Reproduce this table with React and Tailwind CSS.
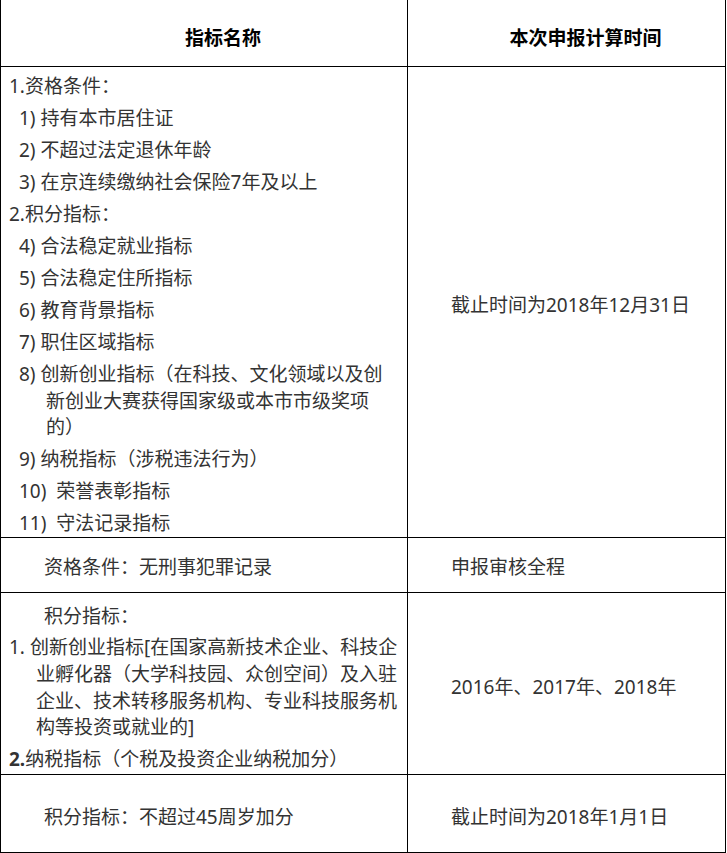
import React from 'react';

const font = "font-['Noto_Sans','Noto_Sans_CJK_SC',sans-serif]";

const P = ({ className = '', children }) => (
    <div className={`whitespace-nowrap leading-[26.7px] ${className}`}>{children}</div>
);

const App = () => {
    return (
        <div className={`w-[727px] bg-white text-[19px] text-[#333] ${font}`}>
            <div className="w-[726px] border-l border-r border-b border-black">
                {/* Header */}
                <div className="flex h-[67px] border-b border-black">
                    <div className="w-[407px] border-r border-black flex items-center justify-center pl-[38px] pt-[10px] font-bold text-black">
                        指标名称
                    </div>
                    <div className="flex-1 flex items-center justify-center pl-[38px] pt-[10px] font-bold text-black">
                        本次申报计算时间
                    </div>
                </div>

                {/* Row 1 */}
                <div className="flex h-[471px] border-b border-black">
                    <div className="w-[407px] border-r border-black pt-[6px] flex flex-col gap-[5.3px]">
                        <P className="pl-[8px]">1.资格条件：</P>
                        <P className="pl-[18px]">1) 持有本市居住证</P>
                        <P className="pl-[18px]">2) 不超过法定退休年龄</P>
                        <P className="pl-[18px]">3) 在京连续缴纳社会保险7年及以上</P>
                        <P className="pl-[8px]">2.积分指标：</P>
                        <P className="pl-[18px]">4) 合法稳定就业指标</P>
                        <P className="pl-[18px]">5) 合法稳定住所指标</P>
                        <P className="pl-[18px]">6) 教育背景指标</P>
                        <P className="pl-[18px]">7) 职住区域指标</P>
                        <div>
                            <P className="pl-[18px]">8) 创新创业指标（在科技、文化领域以及创</P>
                            <P className="pl-[45px]">新创业大赛获得国家级或本市市级奖项</P>
                            <P className="pl-[45px]">的）</P>
                        </div>
                        <P className="pl-[18px]">9) 纳税指标（涉税违法行为）</P>
                        <P className="pl-[18px]">10)&nbsp; 荣誉表彰指标</P>
                        <P className="pl-[18px]">11)&nbsp; 守法记录指标</P>
                    </div>
                    <div className="flex-1 flex items-center pl-[43px] pt-[7px]">
                        截止时间为2018年12月31日
                    </div>
                </div>

                {/* Row 2 */}
                <div className="flex h-[55px] border-b border-black">
                    <div className="w-[407px] border-r border-black flex items-center pl-[43px] pt-[4px]">
                        资格条件：无刑事犯罪记录
                    </div>
                    <div className="flex-1 flex items-center pl-[43px] pt-[4px]">
                        申报审核全程
                    </div>
                </div>

                {/* Row 3 */}
                <div className="flex h-[182px] border-b border-black">
                    <div className="w-[407px] border-r border-black pt-[10px] flex flex-col">
                        <P className="pl-[43px] mb-[4.5px]">积分指标：</P>
                        <P className="pl-[8px]">1. 创新创业指标[在国家高新技术企业、科技企</P>
                        <P className="pl-[35px]">业孵化器（大学科技园、众创空间）及入驻</P>
                        <P className="pl-[35px]">企业、技术转移服务机构、专业科技服务机</P>
                        <P className="pl-[35px] mb-[5.3px]">构等投资或就业的]</P>
                        <P className="pl-[8px]"><span className="font-bold">2.</span>纳税指标（个税及投资企业纳税加分）</P>
                    </div>
                    <div className="flex-1 flex items-center pl-[43px] pt-[7px]">
                        2016年、2017年、2018年
                    </div>
                </div>

                {/* Row 4 */}
                <div className="flex h-[77px]">
                    <div className="w-[407px] border-r border-black flex items-center pl-[43px] pt-[7px]">
                        积分指标：不超过45周岁加分
                    </div>
                    <div className="flex-1 flex items-center pl-[43px] pt-[7px]">
                        截止时间为2018年1月1日
                    </div>
                </div>
            </div>
        </div>
    );
};

export default App;
